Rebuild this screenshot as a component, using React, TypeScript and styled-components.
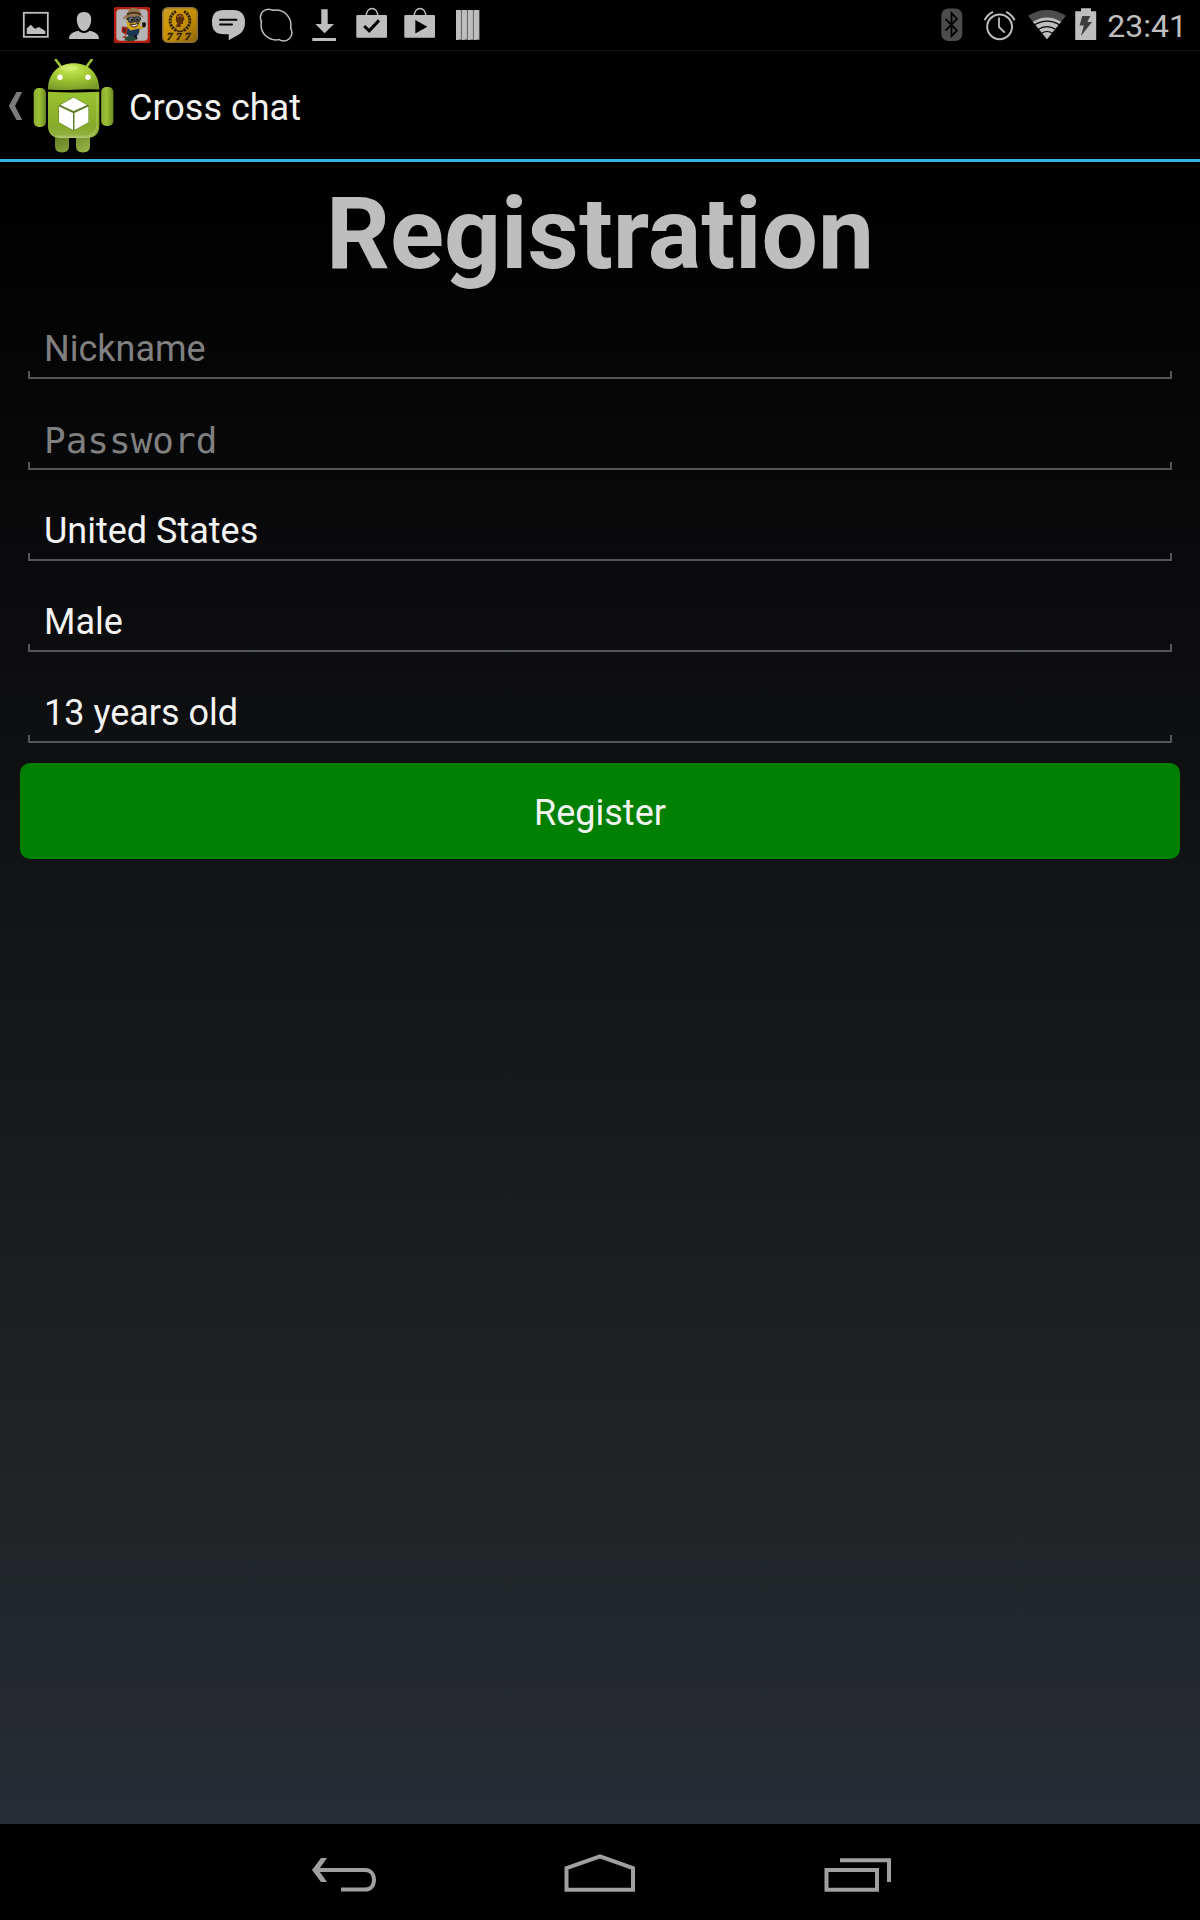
import React from "react";
import styled, { createGlobalStyle } from "styled-components";

const GlobalStyle = createGlobalStyle`
  *, *::before, *::after { box-sizing: border-box; }
  body {
    margin: 0;
    background: #000;
    font-family: Roboto, "Noto Sans", sans-serif;
  }
`;

const ICON = "#bebebe";

const Screen = styled.div`
  display: flex;
  flex-direction: column;
  min-height: 100vh;
  background: linear-gradient(#000 9%, #0e0f11 38%, #1a1e21 65%, #23282c 86%, #282c35 95%);
`;

const StatusBar = styled.div`
  display: flex;
  align-items: center;
  justify-content: space-between;
  height: 51px;
  padding: 0 13px 0 12px;
  background: #000;
  border-bottom: 1px solid #141414;
`;

const StatusGroup = styled.div`
  display: flex;
  align-items: center;
`;

const Slot = styled.span<{ $width?: number }>`
  display: flex;
  justify-content: center;
  width: ${(p) => p.$width ?? 48}px;
`;

const Clock = styled.time`
  padding: 2px 0 0 5px;
  font-size: 32px;
  line-height: 38px;
  color: ${ICON};
`;

const ActionBar = styled.header`
  display: flex;
  align-items: center;
  height: 111px;
  padding: 2px 8px 0;
  border-bottom: 3px solid #33b5e5;
`;

const UpButton = styled.button`
  display: flex;
  align-items: center;
  gap: 11px;
  padding: 0;
  border: 0;
  background: none;
`;

const AppTitle = styled.span`
  padding: 4px 0 0 15px;
  font-size: 36px;
  line-height: 42px;
  color: #f3f3f3;
`;

const Main = styled.main`
  flex: 1;
`;

const Heading = styled.h1`
  margin: 0;
  font-size: 100px;
  line-height: 144px;
  font-weight: 700;
  text-align: center;
  color: #bebebe;
`;

const Form = styled.form`
  display: flex;
  flex-direction: column;
  gap: 20px;
  padding: 12px 20px 20px;
`;

const Fields = styled.div`
  display: flex;
  flex-direction: column;
  gap: 30px;
  padding: 0 8px;
`;

const Field = styled.input<{ $mono?: boolean }>`
  width: 100%;
  height: 61px;
  padding: 10px 16px 9px;
  border: 0;
  outline: 0;
  border-radius: 0;
  font-family: ${(p) => (p.$mono ? '"DejaVu Sans Mono", monospace' : 'Roboto, "Noto Sans", sans-serif')};
  font-size: 36px;
  line-height: 42px;
  color: #f3f3f3;
  background:
    linear-gradient(#555658, #555658) left bottom / 100% 2px no-repeat,
    linear-gradient(#555658, #555658) left bottom / 2px 8px no-repeat,
    linear-gradient(#555658, #555658) right bottom / 2px 8px no-repeat;

  &::placeholder {
    color: #808080;
    opacity: 1;
  }
`;

const RegisterButton = styled.button`
  height: 96px;
  padding: 4px 0 0;
  border: 0;
  border-radius: 10px;
  background: #008000;
  font-family: inherit;
  font-size: 36px;
  line-height: 42px;
  color: #f3f3f3;
`;

const NavBar = styled.nav`
  display: flex;
  justify-content: center;
  height: 96px;
  background: #000;
`;

const NavButton = styled.button`
  display: flex;
  align-items: center;
  justify-content: center;
  width: 256px;
  padding: 0;
  border: 0;
  background: none;
`;

const PictureIcon = () => (
  <svg width="36" height="36" viewBox="0 0 36 36">
    <rect x="5.8" y="5.8" width="24" height="24" fill="none" stroke={ICON} strokeWidth="1.8" />
    <path d="M8.7 27V21.5L12.8 17.8 15.5 20.5 17 21.8 21 20 27.3 24V27Z" fill={ICON} />
  </svg>
);

const PersonIcon = () => (
  <svg width="36" height="36" viewBox="0 0 36 36" fill={ICON}>
    <path d="M18 5C22.6 5 25.4 8 25.2 12.6 25 18.5 22 24 18 24S11 18.5 10.8 12.6C10.6 8 13.4 5 18 5Z" />
    <path d="M3 32C3 27.5 6 25 12.5 23.7 15.5 26.6 20.5 26.6 23.5 23.7 30 25 33 27.5 33 32Z" />
  </svg>
);

const MinionIcon = () => (
  <svg width="36" height="36" viewBox="0 0 36 36">
    <rect width="36" height="36" rx="1.5" fill="#b3200e" />
    <rect x="2.3" y="2.3" width="31.4" height="31.4" rx="4" fill="#b5b3b5" />
    <path d="M14 20 8 19.5 7.5 25 12 28 15 26Z" fill="#9c2a1a" />
    <path d="M9 21 12 23 10 26Z" fill="#4a1410" />
    <path d="M24 21 28 20.5 29.5 18" fill="none" stroke="#c29410" strokeWidth="2.2" />
    <path d="M12.5 11C12.5 7 26 7 26.5 12L26 23C25.5 29 14.5 29 13.5 23Z" fill="#d2a418" />
    <path d="M13.5 20.5 16.5 23.5 25.5 21.5 25 26C23.5 31 15 31.5 13 27Z" fill="#1b3557" />
    <path d="M16.5 29 15 34M21 28 22 32.5" stroke="#171717" strokeWidth="3.2" />
    <path d="M12 30 10 33.5 20 34 22 31 16 28.5Z" fill="#21483a" />
    <path d="M12 28 8 30.5 12 31Z" fill="#a5301c" />
    <path d="M28 16C28 14.5 29.5 16 30 15.5S32.5 15.5 32 18 30 21 28.5 20Z" fill="#161616" />
    <path d="M12.5 11.8H26.8" stroke="#1b1b1b" strokeWidth="2.4" />
    <circle cx="17.4" cy="12.4" r="2.8" fill="#8e979a" stroke="#353c40" strokeWidth="1.8" />
    <circle cx="23.2" cy="12.2" r="2.6" fill="#8e979a" stroke="#353c40" strokeWidth="1.8" />
    <circle cx="17.8" cy="12.8" r="1.3" fill="#1d140c" />
    <circle cx="23.2" cy="12.6" r="1.3" fill="#1d140c" />
    <path d="M16 17C19 18 22 17.5 24.5 16 24 20.5 18 21.5 16 17Z" fill="#f0e9dc" stroke="#3b1711" strokeWidth="1" />
    <path d="M13 7.5C13.5 1.5 18 .5 21 1S26.5 3 27 7.5L30.5 10.5C25 8.5 14 9 8.8 12.5 9 10 11 8.5 13 7.5Z" fill="#94764f" />
    <path d="M13 7.5C17 5.2 22 5.2 27 7.5" fill="none" stroke="#432c1e" strokeWidth="1.8" />
  </svg>
);

const LuckySevenIcon = () => (
  <svg width="36" height="36" viewBox="0 0 36 36">
    <defs>
      <linearGradient id="coin" x1="0" y1="0" x2="1" y2="1">
        <stop offset="0" stopColor="#c39a2c" />
        <stop offset=".3" stopColor="#cf9806" />
        <stop offset=".65" stopColor="#bd8804" />
        <stop offset="1" stopColor="#8a5f0a" />
      </linearGradient>
    </defs>
    <rect x=".7" y=".7" width="34.6" height="34.6" rx="5" fill="url(#coin)" stroke="#8f7336" strokeWidth="1.4" />
    <path d="M14 4.5A10.3 10.3 0 0 0 15 23.5M22 4.5A10.3 10.3 0 0 1 21 23.5" fill="none" stroke="#33240a" strokeWidth="3" strokeDasharray="2.2 .8" />
    <path d="M14.5 23.3Q18 25.5 21.5 23.3" fill="none" stroke="#33240a" strokeWidth="1.4" />
    <path d="M14 10C14.5 6.5 20 5.5 21.5 9L22.5 13 21 14 21 17 18.5 17 19 20 13.5 20 15.5 16.5C14 15 13.5 12.5 14 10Z" fill="#5b2d09" />
    <path d="M15 10Q18 7 21 10" fill="none" stroke="#ad790b" strokeWidth="1" />
    <g fill="#2e1b02" stroke="#2e1b02" strokeWidth=".5" fontFamily="Liberation Serif, serif" fontSize="11" fontWeight="700" fontStyle="italic">
      <text x="5" y="32.5">7</text>
      <text x="14" y="32.5">7</text>
      <text x="23" y="32.5">7</text>
    </g>
  </svg>
);

const ChatIcon = () => (
  <svg width="36" height="36" viewBox="0 0 36 36">
    <path d="M14 3H23C31 3 35 7.5 35 15 35 21 33 25.5 28 28L18.7 33.3V27.3H14C6 27.3 2 23.5 2 15S6 3 14 3Z" fill={ICON} />
    <path d="M10 12.7H26.5M10 17.4H22" stroke="#000" strokeWidth="2" strokeLinecap="round" />
  </svg>
);

const CloudRingIcon = () => (
  <svg width="36" height="36" viewBox="0 0 36 36">
    <g fill={ICON}>
      <circle cx="18" cy="18" r="15.7" />
      <circle cx="10.6" cy="10.4" r="9" />
      <circle cx="25.7" cy="25.7" r="9" />
    </g>
    <g fill="#000">
      <circle cx="18" cy="18" r="14.2" />
      <circle cx="10.6" cy="10.4" r="7.5" />
      <circle cx="25.7" cy="25.7" r="7.5" />
    </g>
  </svg>
);

const DownloadIcon = () => (
  <svg width="36" height="36" viewBox="0 0 36 36" fill={ICON}>
    <path d="M15.3 2.3H21.7V17H28L18.6 26.2 9.3 17H15.3ZM6.3 31H30V34H6.3Z" />
  </svg>
);

const BagIcon = ({ children }: { children: React.ReactNode }) => (
  <svg width="36" height="36" viewBox="0 0 36 36">
    <path d="M12.2 9C12.2-1 23.8-1 23.8 9" fill="none" stroke={ICON} strokeWidth="1.5" />
    <rect x="2.3" y="8" width="30.7" height="22.8" rx="1" fill={ICON} />
    {children}
  </svg>
);

const BarsIcon = () => (
  <svg width="36" height="36" viewBox="0 0 36 36">
    <path d="M6 3.3H29.7V33H6Z" fill="#6a6a6a" />
    {[6, 12, 18, 24].map((x) => (
      <path key={x} d={`M${x} 3H${x + 4.9}V32L${x + 0.8} 33H${x}Z`} fill={ICON} />
    ))}
  </svg>
);

const BluetoothIcon = () => (
  <svg width="22" height="36" viewBox="0 0 22 36">
    <rect x=".3" y="1.5" width="21" height="32.5" rx="7" fill="#4c4c4c" />
    <path d="M4.5 12 16 23.5 10.5 29V6L16 12 4.5 23.5" fill="none" stroke="#000" strokeWidth="1.8" />
  </svg>
);

const AlarmIcon = () => (
  <svg width="36" height="36" viewBox="0 0 36 36" fill="none" stroke={ICON}>
    <circle cx="17.6" cy="19.8" r="12.4" strokeWidth="2" />
    <path d="M17 10.5V20L22.8 25.6" strokeWidth="1.8" />
    <path d="M2.6 13.2Q5 7.8 11 4.8M32.6 13.2Q30 7.8 24.2 4.8" strokeWidth="2" />
  </svg>
);

const WifiIcon = () => (
  <svg width="38" height="36" viewBox="0 0 38 36">
    <path d="M0 8.8Q19-3 38 8.8L19 32.3Z" fill="#4c4c4c" />
    <path d="M4.9 14.8Q19 6 33.1 14.8L19 32.3Z" fill={ICON} />
    <path d="M6 18.1Q19 10 32 18.1M10 22.4Q19 16.8 28 22.4M13 26.4Q19 22.6 25 26.4" fill="none" stroke="#000" strokeWidth="1.2" />
  </svg>
);

const BatteryIcon = () => (
  <svg width="22" height="36" viewBox="0 0 22 36">
    <path d="M6 1.3H16V4.3H21.2V33H.2V4.3H6Z" fill={ICON} />
    <path d="M7.2 9H15.3L12.3 15H17L6 29 8.8 18.6H4.6Z" fill="#3c3c3c" />
  </svg>
);

const ChevronIcon = () => (
  <svg width="14" height="28" viewBox="0 0 14 28">
    <path d="M8.5 0H14.3L7 14 14.3 28H8.5L.8 14Z" fill="#7b7b7b" />
  </svg>
);

const RobotLogo = () => (
  <svg width="81" height="94" viewBox="0 0 81 94">
    <defs>
      <radialGradient id="head" cx=".45" cy=".2" r=".85">
        <stop offset="0" stopColor="#c9e95c" />
        <stop offset=".45" stopColor="#a3cb32" />
        <stop offset="1" stopColor="#75982a" />
      </radialGradient>
      <linearGradient id="body" x1="0" y1="0" x2="0" y2="1">
        <stop offset="0" stopColor="#9ac22f" />
        <stop offset=".75" stopColor="#88aa2b" />
        <stop offset=".92" stopColor="#8faf3d" />
        <stop offset="1" stopColor="#b4cc76" />
      </linearGradient>
      <linearGradient id="limb" x1="0" y1="0" x2="1" y2="0">
        <stop offset="0" stopColor="#8cad35" />
        <stop offset=".45" stopColor="#9cc133" />
        <stop offset="1" stopColor="#6b8a22" />
      </linearGradient>
      <linearGradient id="leg" x1="0" y1="0" x2="1" y2="1">
        <stop offset="0" stopColor="#5b7519" />
        <stop offset="1" stopColor="#9cba4b" />
      </linearGradient>
    </defs>
    <path d="M22.8 .8 28.5 8.5M58.6 .8 53 8.5" stroke="#9dc135" strokeWidth="2.6" strokeLinecap="round" />
    <path d="M22 74H36V87Q36 93.5 29 93.5T22 87ZM43 74H57V87Q57 93.5 50 93.5T43 87Z" fill="url(#leg)" />
    <rect x=".7" y="29" width="12.2" height="39" rx="5" fill="url(#limb)" />
    <rect x="68.2" y="28" width="12.2" height="39" rx="5" fill="url(#limb)" />
    <path d="M15 30.5C15 14 26 4.2 40.7 4.2S66.3 14 66.3 30.5Q53 29.8 40.7 30.8 28 31.4 15 30.5Z" fill="url(#head)" />
    <ellipse cx="36" cy="9" rx="9" ry="3" fill="#e3f48c" opacity=".45" />
    <path d="M15 32.8Q40 34 66.3 32.8V67Q66.3 79 53 79H28Q15 79 15 67Z" fill="url(#body)" />
    <path d="M64 36V66Q64 75 55 77" fill="none" stroke="#bcd36f" strokeWidth="1.2" opacity=".6" />
    <circle cx="27" cy="18.3" r="2.7" fill="#fff" />
    <circle cx="55" cy="18.3" r="2.7" fill="#fff" />
    <path d="M40.7 38 55.8 46.6V63.6L40.7 72 25.5 63.6V46.6Z" fill="#62802a" />
    <g fill="#fff">
      <path d="M40.7 38.5 54 46 40.7 52 27.4 46Z" />
      <path d="M26 47.6 40 54V71L26 63.3Z" />
      <path d="M55.4 47.6 41.5 54V71L55.4 63.3Z" />
    </g>
  </svg>
);

const NAV_STROKE = { fill: "none", stroke: "#a0a0a0", strokeWidth: 4 };

const BackIcon = () => (
  <svg width="72" height="42" viewBox="0 0 72 42" {...NAV_STROKE}>
    <path d="M6 19H57C62.5 19 66 23 66 28.8S62.5 38.6 57 38.6H33" />
    <path d="M13 7H19L10.5 19 19 31H13L4 19Z" fill="#a0a0a0" stroke="none" />
  </svg>
);

const HomeIcon = () => (
  <svg width="72" height="42" viewBox="0 0 72 42" {...NAV_STROKE}>
    <path d="M2.5 38.8V17.2L36 5.4 69 17.2V38.8Z" />
  </svg>
);

const RecentsIcon = () => (
  <svg width="72" height="42" viewBox="0 0 72 42" {...NAV_STROKE}>
    <path d="M6.5 19H57V38.8H6.5ZM20 9.3H69V31" />
  </svg>
);

export default function App() {
  return (
    <>
      <GlobalStyle />
      <Screen>
        <StatusBar>
          <StatusGroup>
            <Slot><PictureIcon /></Slot>
            <Slot><PersonIcon /></Slot>
            <Slot><MinionIcon /></Slot>
            <Slot><LuckySevenIcon /></Slot>
            <Slot><ChatIcon /></Slot>
            <Slot><CloudRingIcon /></Slot>
            <Slot><DownloadIcon /></Slot>
            <Slot>
              <BagIcon>
                <path d="M10.2 19 15.2 23.8 25 13.4" fill="none" stroke="#000" strokeWidth="3" />
              </BagIcon>
            </Slot>
            <Slot>
              <BagIcon>
                <path d="M13.3 13V26.4L25.4 19.7Z" fill="#000" />
              </BagIcon>
            </Slot>
            <Slot><BarsIcon /></Slot>
          </StatusGroup>
          <StatusGroup>
            <Slot><BluetoothIcon /></Slot>
            <Slot><AlarmIcon /></Slot>
            <Slot $width={46}><WifiIcon /></Slot>
            <Slot $width={32}><BatteryIcon /></Slot>
            <Clock>23:41</Clock>
          </StatusGroup>
        </StatusBar>

        <ActionBar>
          <UpButton type="button" aria-label="Navigate up">
            <ChevronIcon />
            <RobotLogo />
          </UpButton>
          <AppTitle>Cross chat</AppTitle>
        </ActionBar>

        <Main>
          <Heading>Registration</Heading>
          <Form onSubmit={(e) => e.preventDefault()}>
            <Fields>
              <Field type="text" aria-label="Nickname" placeholder="Nickname" />
              <Field type="password" aria-label="Password" placeholder="Password" $mono />
              <Field type="text" aria-label="Country" defaultValue="United States" />
              <Field type="text" aria-label="Gender" defaultValue="Male" />
              <Field type="text" aria-label="Age" defaultValue="13 years old" />
            </Fields>
            <RegisterButton type="submit">Register</RegisterButton>
          </Form>
        </Main>

        <NavBar>
          <NavButton type="button" aria-label="Back"><BackIcon /></NavButton>
          <NavButton type="button" aria-label="Home"><HomeIcon /></NavButton>
          <NavButton type="button" aria-label="Recent apps"><RecentsIcon /></NavButton>
        </NavBar>
      </Screen>
    </>
  );
}
